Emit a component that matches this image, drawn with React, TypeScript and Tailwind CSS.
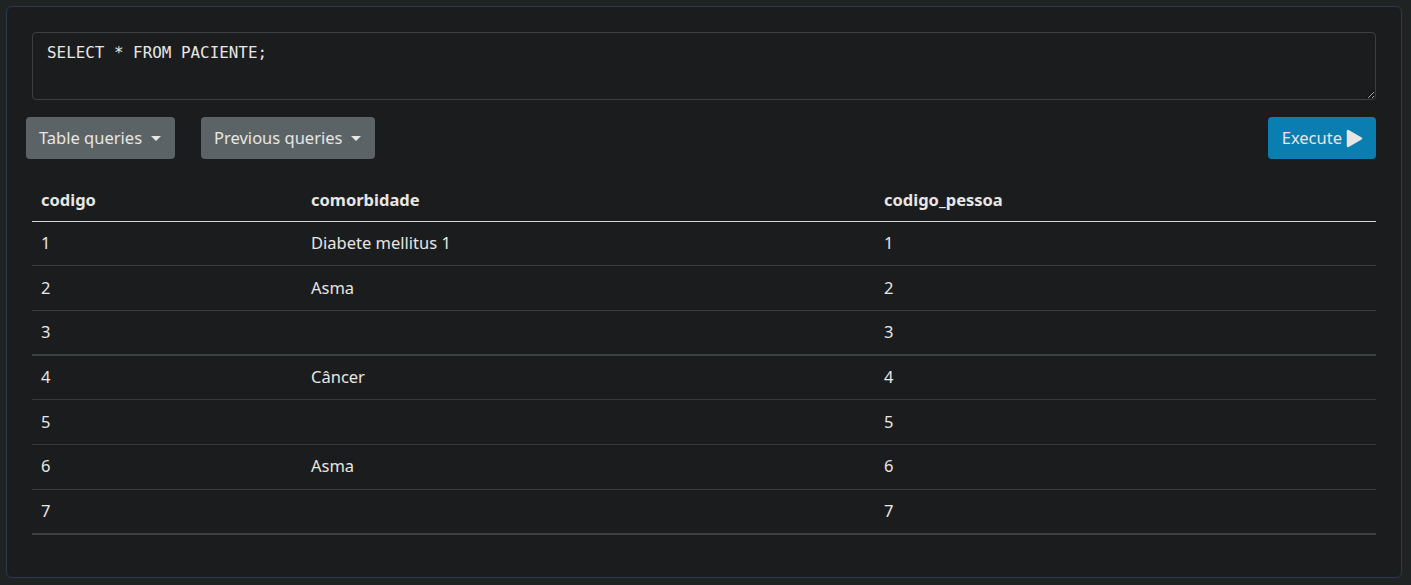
import React from "react";

const rows = [
  { codigo: "1", comorbidade: "Diabete mellitus 1", pessoa: "1" },
  { codigo: "2", comorbidade: "Asma", pessoa: "2" },
  { codigo: "3", comorbidade: "", pessoa: "3" },
  { codigo: "4", comorbidade: "Câncer", pessoa: "4" },
  { codigo: "5", comorbidade: "", pessoa: "5" },
  { codigo: "6", comorbidade: "Asma", pessoa: "6" },
  { codigo: "7", comorbidade: "", pessoa: "7" },
];

function Caret() {
  return (
    <span className="ml-[9px] inline-block h-0 w-0 border-x-[5px] border-t-[5px] border-x-transparent border-t-[#e8e6e3] align-middle" />
  );
}

export default function App() {
  return (
    <main className="min-h-screen bg-[#202324] pl-[6px] pr-[9px] pt-[6px] font-['Noto_Sans',sans-serif] text-[#e8e6e3]">
      <div className="h-[572px] rounded-[6px] border border-[#2b3a4c] bg-[#1b1c1e] px-[19px] pt-[25px]">
        <div className="px-[6px]">
          <textarea
            defaultValue="SELECT * FROM PACIENTE;"
            spellCheck={false}
            className="block h-[68px] w-full resize-y rounded-[4px] border border-[#3b3f42] bg-[#1b1c1e] px-[14px] py-[10px] font-['DejaVu_Sans_Mono',monospace] text-[15.9px] leading-[20px] text-[#e8e6e3] outline-none [color-scheme:dark]"
          />
        </div>
        <div className="mt-[17px] flex items-center">
          <button className="flex h-[42px] items-center rounded-[4px] bg-[#5c6366] pl-[13px] pr-[14px] text-[16.5px]">
            Table queries
            <Caret />
          </button>
          <button className="ml-[26px] flex h-[42px] items-center rounded-[4px] bg-[#5c6366] pl-[13px] pr-[14px] text-[16.5px]">
            Previous queries
            <Caret />
          </button>
          <button className="ml-auto mr-[6px] flex h-[42px] items-center gap-[4px] rounded-[4px] bg-[#0a7eb0] pl-[14px] pr-[13px] text-[16.5px]">
            Execute
            <svg width="17" height="19" viewBox="0 0 17 19" fill="#e8e6e3">
              <path
                d="M2 2 L15 9.5 L2 17 Z"
                stroke="#e8e6e3"
                strokeWidth="2.5"
                strokeLinejoin="round"
              />
            </svg>
          </button>
        </div>
        <div className="mt-[21px] px-[6px]">
          <table className="w-full border-collapse text-left text-[16.5px]">
            <thead>
              <tr className="h-[41px] border-b border-[#d8d4cf]">
                <th className="w-[270px] px-[9px] font-bold">codigo</th>
                <th className="w-[573px] px-[9px] font-bold">comorbidade</th>
                <th className="px-[9px] font-bold">codigo_pessoa</th>
              </tr>
            </thead>
            <tbody>
              {rows.map((r, i) => (
                <tr
                  key={r.codigo}
                  className={
                    i === 2 || i === 6
                      ? "h-[44.7px] border-b-2 border-[#3a4143]"
                      : "h-[44.7px] border-b border-[#38393b]"
                  }
                >
                  <td className="px-[9px]">{r.codigo}</td>
                  <td className="px-[9px]">{r.comorbidade}</td>
                  <td className="px-[9px]">{r.pessoa}</td>
                </tr>
              ))}
            </tbody>
          </table>
        </div>
      </div>
    </main>
  );
}
